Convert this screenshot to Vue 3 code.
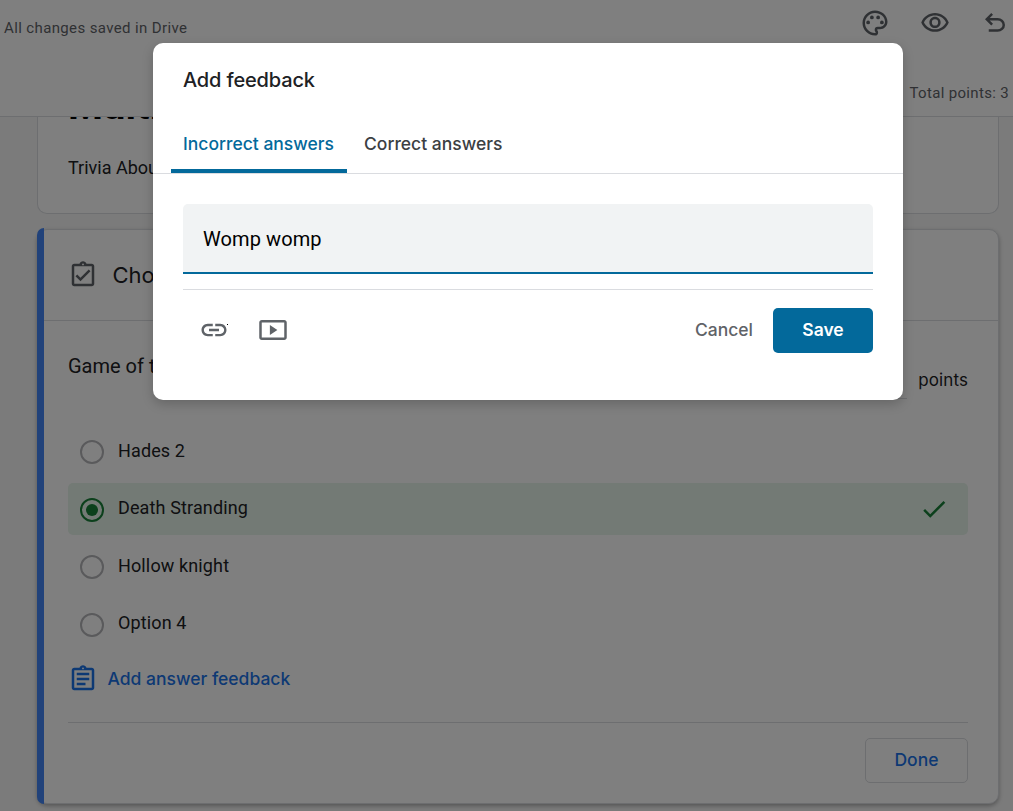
<template>
  <div class="page">
    <header class="topbar">
      <div class="topbar-row">
        <span class="saved">All changes saved in Drive</span>
        <div class="topbar-icons">
          <svg class="icon30" viewBox="0 0 24 24">
            <path d="M12 22C6.490 22 2 17.510 2 12S6.490 2 12 2s10 4.040 10 9c0 3.310-2.690 6-6 6h-1.770c-.28 0-.5.220-.5.500 0 .120.050.230.130.330.410.470.640 1.060.640 1.670A2.500 2.500 0 0 1 12 22zm0-18c-4.410 0-8 3.590-8 8s3.590 8 8 8c.28 0 .5-.220.5-.500a.54.54 0 0 0-.14-.350c-.41-.460-.63-1.050-.63-1.650a2.500 2.500 0 0 1 2.500-2.500H16c2.210 0 4-1.790 4-4 0-3.860-3.590-7-8-7z" />
            <circle cx="6.500" cy="11.500" r="1.500" />
            <circle cx="9.500" cy="7.500" r="1.500" />
            <circle cx="14.500" cy="7.500" r="1.500" />
            <circle cx="17.500" cy="11.500" r="1.500" />
          </svg>
          <svg class="icon30" viewBox="0 0 24 24">
            <path d="M12 4C7 4 2.730 7.110 1 11.500 2.730 15.890 7 19 12 19s9.270-3.110 11-7.500C21.270 7.110 17 4 12 4zm0 13c-3.790 0-7.170-2.130-8.820-5.500C4.830 8.130 8.210 6 12 6s7.170 2.130 8.820 5.500C19.170 14.870 15.790 17 12 17zm0-10c-2.480 0-4.500 2.020-4.500 4.500S9.520 16 12 16s4.500-2.020 4.500-4.500S14.480 7 12 7zm0 7a2.500 2.500 0 1 1 0-5 2.500 2.500 0 0 1 0 5z" />
          </svg>
          <svg class="icon30" viewBox="0 0 24 24">
            <path d="M7 19v-2h7.100q1.575 0 2.738-1T18 13.500 16.838 11 14.100 10H7.800l2.600 2.600L9 14 4 9l5-5 1.400 1.400L7.800 8h6.300q2.425 0 4.163 1.575T20 13.500t-1.737 3.925T14.100 19z" />
          </svg>
        </div>
      </div>
      <div class="total">Total points: 3</div>
    </header>

    <main class="content">
      <section class="card title-card">
        <h1 class="form-title">Multi</h1>
        <p class="form-desc">Trivia Abou</p>
      </section>

      <section class="card question-card">
        <div class="question-head">
          <svg class="icon30" viewBox="0 0 24 24">
            <path d="M19 3h-4.180C14.400 1.840 13.300 1 12 1s-2.400.840-2.820 2H5c-1.100 0-2 .9-2 2v14c0 1.100.9 2 2 2h14c1.100 0 2-.9 2-2V5c0-1.100-.9-2-2-2zm-7-.250a.75.75 0 1 1 0 1.500.75.75 0 0 1 0-1.500zM19 19H5V5h14zM17.990 9l-1.410-1.420-6.590 6.590-2.580-2.570-1.420 1.410 4 3.990z" />
          </svg>
          <span class="head-text">Cho</span>
        </div>

        <div class="question-row">
          <span class="question-text">Game of t</span>
          <div class="points">
            <span class="points-input"></span>
            <span class="points-label">points</span>
          </div>
        </div>

        <ul class="options">
          <li
            v-for="option in options"
            :key="option.label"
            :class="['option', { correct: option.correct }]"
          >
            <span class="radio"></span>
            <span class="option-label">{{ option.label }}</span>
            <svg v-if="option.correct" class="icon30 check" viewBox="0 0 24 24">
              <path d="M9 16.170 4.830 12l-1.420 1.410L9 19 21 7l-1.410-1.410z" />
            </svg>
          </li>
        </ul>

        <div class="add-feedback">
          <svg class="icon30" viewBox="0 0 24 24">
            <path d="M7 15h7v2H7zm0-4h10v2H7zm0-4h10v2H7zm12-4h-4.180C14.400 1.840 13.300 1 12 1s-2.400.840-2.820 2H5c-1.100 0-2 .9-2 2v14c0 1.100.9 2 2 2h14c1.100 0 2-.9 2-2V5c0-1.100-.9-2-2-2zm-7-.250a.75.75 0 1 1 0 1.500.75.75 0 0 1 0-1.500zM19 19H5V5h14z" />
          </svg>
          <span>Add answer feedback</span>
        </div>

        <div class="card-footer">
          <button class="done">Done</button>
        </div>
      </section>
    </main>

    <div class="scrim">
      <div class="dialog">
        <h2 class="dialog-title">Add feedback</h2>
        <div class="tabs">
          <button
            v-for="tab in tabs"
            :key="tab"
            :class="['tab', { active: tab === currentTab }]"
            @click="currentTab = tab"
          >
            {{ tab }}
          </button>
        </div>
        <div class="dialog-body">
          <input v-model="feedback" class="feedback-input" type="text" />
          <div class="actions">
            <svg class="icon30 link" viewBox="0 0 24 24">
              <path d="M17 7h-4v1.900h4c1.710 0 3.100 1.390 3.100 3.100s-1.390 3.100-3.100 3.100h-4V17h4c2.760 0 5-2.240 5-5s-2.240-5-5-5zm-6 8.100H7c-1.710 0-3.100-1.390-3.100-3.100S5.290 8.900 7 8.900h4V7H7c-2.760 0-5 2.240-5 5s2.240 5 5 5h4zM8 11h8v2H8z" />
              <path class="dot" d="M22.400 7.200h.8v.8h-.8z" />
            </svg>
            <svg class="icon30 video" viewBox="0 0 24 24">
              <path d="M9.500 8v8l6-4zm11.500-4H3c-1.100 0-2 .9-2 2v12c0 1.100.9 2 2 2h18c1.100 0 2-.9 2-2V6c0-1.100-.9-2-2-2zm0 14H3V6h18z" />
            </svg>
            <button class="cancel">Cancel</button>
            <button class="save">Save</button>
          </div>
        </div>
      </div>
    </div>
  </div>
</template>

<script setup>
import { ref } from 'vue'

const tabs = ['Incorrect answers', 'Correct answers']
const currentTab = ref('Incorrect answers')
const feedback = ref('Womp womp')

const options = ref([
  { label: 'Hades 2', correct: false },
  { label: 'Death Stranding', correct: true },
  { label: 'Hollow knight', correct: false },
  { label: 'Option 4', correct: false },
])
</script>

<style>
body {
  overflow: hidden;
}
</style>

<style scoped>
.page {
  position: relative;
  display: flex;
  flex-direction: column;
  width: 1013px;
  height: 811px;
  overflow: hidden;
  background: #f6f6f6;
  color: #202124;
  font-family: Roboto, Arial, sans-serif;
}

.page * {
  box-sizing: border-box;
}

button {
  padding: 0;
  border: none;
  background: none;
  font-family: Inter, sans-serif;
  font-size: 17.5px;
  font-weight: 500;
  white-space: nowrap;
}

.icon30 {
  flex: none;
  display: block;
  width: 30px;
  height: 30px;
  fill: #5f6368;
}

/* Top bar */
.topbar {
  flex: none;
  height: 117px;
  background: #fff;
  border-bottom: 1px solid #dadce0;
  color: #5f6368;
}

.topbar-row {
  display: flex;
  justify-content: space-between;
  height: 83px;
  padding: 8px 3px 0 4px;
}

.saved {
  padding-top: 10px;
  font-size: 15px;
  line-height: 20px;
  letter-spacing: 0.37px;
}

.topbar-icons {
  display: flex;
  gap: 30px;
}

.total {
  padding-right: 4px;
  font-size: 15px;
  line-height: 20px;
  letter-spacing: 0.33px;
  text-align: right;
}

/* Form cards */
.content {
  flex: 1;
  padding: 0 14px 0 37px;
  overflow: hidden;
}

.card {
  background: #fff;
  border: 1px solid #dadce0;
  border-radius: 10px;
}

.title-card {
  display: flow-root;
  height: 97px;
  padding-left: 30px;
  border-top: none;
  border-radius: 0 0 10px 10px;
}

/* scrolled almost out of view below the top bar */
.form-title {
  height: 50px;
  margin: -36px 0 0;
  color: #000;
  font-size: 40px;
  line-height: 50px;
  font-weight: 700;
}

.form-desc {
  margin: 24px 0 0;
  font-size: 18px;
  line-height: 25px;
}

.question-card {
  position: relative;
  height: 575px;
  margin-top: 15px;
  box-shadow: 0 2px 4px rgba(0, 0, 0, 0.3);
}

.question-card::before {
  content: '';
  position: absolute;
  top: -2px;
  bottom: -1px;
  left: -1px;
  width: 7px;
  border-radius: 10px 0 0 10px;
  background: #4285f4;
}

.question-head {
  display: flex;
  align-items: center;
  gap: 15px;
  height: 91px;
  padding: 0 0 1px 29.5px;
  border-bottom: 1px solid #dadce0;
}

.head-text {
  font-family: Inter, sans-serif;
  font-size: 22px;
}

.question-row {
  display: flex;
  justify-content: space-between;
  height: 104px;
  padding: 33px 30px 0;
}

.question-text {
  font-size: 20px;
  line-height: 25px;
}

.points {
  display: flex;
  gap: 11px;
  padding-top: 14px;
}

.points-input {
  width: 70px;
  height: 31px;
  border-bottom: 1px solid #dadce0;
}

.points-label {
  font-family: Inter, sans-serif;
  font-size: 17px;
  line-height: 25px;
  letter-spacing: 0.1px;
}

.options {
  margin: 0;
  padding: 0 30px;
  list-style: none;
}

.option {
  display: flex;
  align-items: center;
  height: 52px;
  margin-bottom: 5.500px;
  padding-left: 12px;
  border-radius: 5px;
}

.radio {
  display: flex;
  align-items: center;
  justify-content: center;
  width: 24px;
  height: 24px;
  margin-top: 2px;
  border: 2px solid #b4b5b8;
  border-radius: 50%;
}

.option-label {
  margin: -2px 0 0 14px;
  font-size: 18px;
  line-height: 25px;
  letter-spacing: 0.13px;
}

.correct {
  background: #e6f4ea;
}

.correct .radio {
  border-color: #188038;
}

.correct .radio::after {
  content: '';
  width: 12px;
  height: 12px;
  border-radius: 50%;
  background: #188038;
}

.check {
  margin-left: auto;
  margin-right: 19px;
  fill: #188038;
}

.add-feedback {
  display: flex;
  align-items: center;
  gap: 10px;
  margin-top: 14px;
  padding-left: 29.5px;
  color: #1a73e8;
  font-family: Inter, sans-serif;
  font-size: 17.5px;
  font-weight: 500;
}

.add-feedback .icon30 {
  fill: #1a73e8;
}

.card-footer {
  display: flex;
  justify-content: flex-end;
  margin: 28px 30px 0;
  padding-top: 15px;
  border-top: 1px solid #dadce0;
}

.done {
  width: 103px;
  height: 45px;
  padding-bottom: 2px;
  border: 1px solid #dadce0;
  border-radius: 5px;
  color: #1a73e8;
}

/* Feedback dialog over the dimmed editor */
.scrim {
  position: absolute;
  inset: 0;
  background: rgba(0, 0, 0, 0.5);
}

.dialog {
  width: 750px;
  height: 357px;
  margin: 43px 0 0 153px;
  border-radius: 10px;
  background: #fff;
  box-shadow: 0 4px 12px rgba(0, 0, 0, 0.2);
  overflow: hidden;
}

.dialog-title {
  margin: 0;
  padding: 22px 30px 0;
  font-family: Inter, sans-serif;
  font-size: 20px;
  line-height: 30px;
  font-weight: 500;
  letter-spacing: -0.15px;
}

.tabs {
  display: flex;
  gap: 5px;
  height: 79px;
  padding: 20px 18px 0;
  border-bottom: 1px solid #dadce0;
}

.tab {
  height: 58px;
  padding: 2px 12px 0;
  border-bottom: 4px solid transparent;
  color: #3c4043;
}

.tab.active {
  width: 176px;
  padding-right: 13px;
  border-bottom-color: #03699b;
  border-radius: 4px 4px 0 0;
  color: #03699b;
}

.dialog-body {
  padding: 30px 30px 0;
}

.feedback-input {
  display: block;
  width: 100%;
  height: 70px;
  padding: 2px 20px 0;
  border: none;
  border-bottom: 2px solid #03699b;
  border-radius: 5px 5px 0 0;
  outline: none;
  background: #f1f3f4;
  color: #000;
  font-family: Roboto, sans-serif;
  font-size: 20px;
  letter-spacing: 0.1px;
}

.actions {
  display: flex;
  align-items: center;
  margin-top: 15px;
  padding: 18px 0 0 16px;
  border-top: 1px solid #dadce0;
}

.link,
.video {
  margin-bottom: 1px;
}

.dot {
  fill: #000;
}

.video {
  margin-left: 29px;
}

.cancel {
  margin-left: auto;
  margin-right: 20px;
  padding-bottom: 2px;
  color: #5f6368;
}

.save {
  width: 100px;
  height: 45px;
  padding-bottom: 2px;
  border-radius: 5px;
  background: #03699b;
  color: #fff;
  font-weight: 600;
}
</style>
